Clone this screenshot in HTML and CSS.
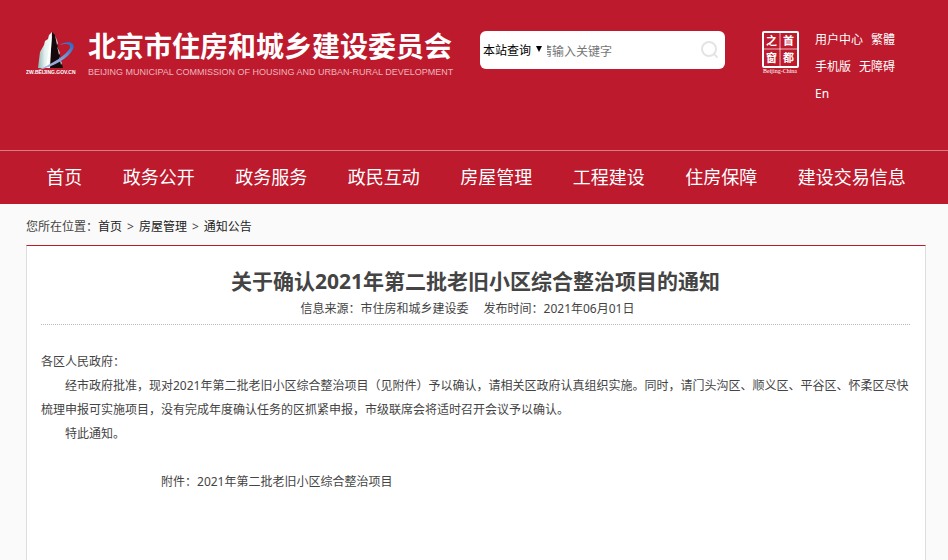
FILE: index.html
```html
<!DOCTYPE html>
<html lang="zh-CN">
<head>
<meta charset="utf-8">
<meta name="viewport" content="width=device-width, initial-scale=1">
<title>关于确认2021年第二批老旧小区综合整治项目的通知</title>
<link rel="stylesheet" href="styles.css">
</head>
<body>
<header class="site-header">
  <div class="masthead container">
    <a class="brand" href="#">
      <svg class="brand-mark" viewBox="0 0 54 48" aria-hidden="true">
        <defs>
          <linearGradient id="face" x1="0" x2="1" y1="0" y2="0">
            <stop offset="0" stop-color="#8fb5b5"/>
            <stop offset="0.5" stop-color="#e4f1ef"/>
            <stop offset="1" stop-color="#f8ffff"/>
          </linearGradient>
          <linearGradient id="orbit" x1="0" x2="1" y1="1" y2="0">
            <stop offset="0" stop-color="#b9b7dd"/>
            <stop offset="0.5" stop-color="#8fa6dc"/>
            <stop offset="1" stop-color="#2166c4"/>
          </linearGradient>
        </defs>
        <path d="M12 40 14 24 18 17 19 13 22 11 23 7 26 4V40Z" fill="url(#face)"/>
        <path d="M26 4 29 7 37 40H24Z" fill="#16090c"/>
        <path d="M26 4 25 20 22 40H20L23 20Z" fill="#fff"/>
        <path d="M29 7 32 15 31 17ZM31 18 34 25 33 27ZM33 28 36 35 35 37Z" fill="#c9c6cc"/>
        <path d="M33 17C42 12 50 14 47 21 43 30 29 38 10 43 28 35 40 27 44 20 45 16 41 15 33 17Z" fill="url(#orbit)"/>
        <text class="brand-domain" x="0" y="46" fill="#fff">ZW.BEIJING.GOV.CN</text>
      </svg>
      <span class="brand-text">
        <span class="brand-name">北京市住房和城乡建设委员会</span>
        <span class="brand-english">BEIJING MUNICIPAL COMMISSION OF HOUSING AND URBAN-RURAL DEVELOPMENT</span>
      </span>
    </a>
    <form class="search">
      <span class="scope">
        <select class="scope-select" aria-label="查询范围">
          <option>本站查询</option>
        </select>
        <svg class="scope-arrow" viewBox="0 0 6 6" aria-hidden="true"><path d="M0 0H6L3 6Z"/></svg>
      </span>
      <input class="search-input" type="text" placeholder="请输入关键字" aria-label="关键字">
      <button class="search-button" type="submit" aria-label="搜索">
        <svg viewBox="0 0 18 18" aria-hidden="true"><circle cx="8" cy="8" r="7"/><path d="M13 13 16 16"/></svg>
      </button>
    </form>
    <a class="seal" href="#" aria-label="首都之窗">
      <svg viewBox="0 0 40 44" aria-hidden="true">
        <rect x="3" y="2" width="35" height="35" rx="1" fill="none" stroke="#fff" stroke-width="2"/>
        <path d="M20 3V36M4 19H37" stroke="#fff" stroke-opacity="0.7"/>
        <text class="seal-char" x="6" y="15">之</text>
        <text class="seal-char" x="23" y="15">首</text>
        <text class="seal-char" x="6" y="32">窗</text>
        <text class="seal-char" x="23" y="32">都</text>
        <text class="seal-caption" x="20" y="43">Beijing-China</text>
      </svg>
    </a>
    <div class="tools">
      <a href="#">用户中心</a>
      <a href="#">繁體</a>
      <a href="#">手机版</a>
      <a href="#">无障碍</a>
      <a href="#">En</a>
    </div>
  </div>
  <nav class="main-nav">
    <div class="nav-list container">
      <a href="#">首页</a>
      <a href="#">政务公开</a>
      <a href="#">政务服务</a>
      <a href="#">政民互动</a>
      <a href="#">房屋管理</a>
      <a href="#">工程建设</a>
      <a href="#">住房保障</a>
      <a href="#">建设交易信息</a>
    </div>
  </nav>
</header>
<main class="container">
  <div class="breadcrumb">
    <span>您所在位置：</span><a href="#">首页</a><span class="sep">&gt;</span><a href="#">房屋管理</a><span class="sep">&gt;</span><a href="#">通知公告</a>
  </div>
  <article class="panel">
    <h1>关于确认2021年第二批老旧小区综合整治项目的通知</h1>
    <div class="meta"><span>信息来源：市住房和城乡建设委</span><span>发布时间：2021年06月01日</span></div>
    <div class="content">
      <p>各区人民政府：</p>
      <p class="indent">经市政府批准，现对2021年第二批老旧小区综合整治项目（见附件）予以确认，请相关区政府认真组织实施。同时，请门头沟区、顺义区、平谷区、怀柔区尽快梳理申报可实施项目，没有完成年度确认任务的区抓紧申报，市级联席会将适时召开会议予以确认。</p>
      <p class="indent">特此通知。</p>
      <p class="attachment">附件：<a href="#">2021年第二批老旧小区综合整治项目</a></p>
    </div>
  </article>
</main>
</body>
</html>
```
FILE: styles.css
```css
* {
  box-sizing: border-box;
}

body {
  margin: 0;
  min-height: 100vh;
  display: flex;
  flex-direction: column;
  background: #fafafa;
  color: #444;
  font: 12px/24px "Noto Sans", "Noto Sans CJK SC", sans-serif;
}

a {
  color: inherit;
  text-decoration: none;
}

.container {
  padding: 0 22px 0 26px;
}

.site-header {
  background: #bd1a2d;
  color: #fff;
}

.masthead {
  display: flex;
  align-items: flex-start;
  height: 150px;
}

.brand {
  display: flex;
  gap: 8px;
  flex: none;
  width: 432px;
  margin: 28px 22px 0 0;
}

.brand-mark {
  flex: none;
  width: 54px;
  height: 48px;
}

.brand-domain {
  font: 700 5px "Liberation Sans", sans-serif;
}

.brand-text {
  display: flex;
  flex-direction: column;
  white-space: nowrap;
}

.brand-name {
  font-size: 28px;
  font-weight: 700;
  line-height: 36px;
}

.brand-english {
  color: #efb5bd;
  font: 9px/16px "Liberation Sans", sans-serif;
}

.search {
  display: flex;
  align-items: center;
  flex: none;
  width: 245px;
  height: 38px;
  margin: 31px 35px 0 0;
  overflow: hidden;
  border-radius: 6px;
  background: #fff;
}

.scope {
  position: relative;
  z-index: 1;
  flex: none;
  width: 67px;
  background: #fff;
}

.scope-select {
  display: block;
  width: 100%;
  height: 26px;
  padding: 2px 0 0 3px;
  border: 0;
  appearance: none;
  background: transparent;
  color: #000;
  font: inherit;
}

.scope-arrow {
  position: absolute;
  top: 9px;
  right: 5px;
  width: 6px;
  height: 6px;
  pointer-events: none;
}

.search-input {
  flex: 1;
  min-width: 0;
  height: 26px;
  margin-left: -7px;
  padding: 2px 0 0;
  border: 0;
  background: transparent;
  font: inherit;
}

.search-input::placeholder {
  color: #757575;
}

.search-button {
  width: 30px;
  height: 38px;
  padding: 0 6px;
  border: 0;
  background: transparent;
}

.search-button svg {
  display: block;
  width: 18px;
  height: 18px;
  fill: none;
  stroke: #e4e4e4;
  stroke-width: 2;
  stroke-linecap: round;
}

.seal {
  flex: none;
  width: 40px;
  margin: 30px 15px 0 0;
}

.seal svg {
  display: block;
  width: 100%;
}

.seal-char {
  fill: #fff;
  font: 700 11px "Noto Sans CJK SC", sans-serif;
}

.seal-caption {
  fill: #fff;
  font: 6px "Liberation Serif", serif;
  text-anchor: middle;
}

.tools {
  display: flex;
  flex-wrap: wrap;
  column-gap: 8px;
  max-width: 92px;
  margin-top: 26px;
  line-height: 27px;
}

.main-nav {
  border-top: 1px solid #d77b82;
}

.nav-list {
  display: flex;
  justify-content: space-around;
  font-size: 18px;
  line-height: 53px;
  white-space: nowrap;
}

main {
  display: flex;
  flex-direction: column;
  flex: 1;
}

.breadcrumb {
  padding: 11px 0 6px;
}

.breadcrumb a {
  color: #222;
}

.sep {
  margin: 0 5px;
}

.panel {
  flex: 1;
  padding: 20px 15px 0 14px;
  border: 1px solid #ddd;
  border-top-color: #bd1a2d;
  border-bottom: 0;
  background: #fff;
}

h1 {
  margin: 0;
  font-size: 21px;
  line-height: 31px;
  text-align: center;
}

.meta {
  display: flex;
  justify-content: center;
  gap: 15px;
  padding: 0 16px 3px 0;
  border-bottom: 1px dotted #bbb;
}

.content {
  padding-top: 25px;
}

.content p {
  margin: 0;
}

.content .indent {
  text-indent: 2em;
}

.content .attachment {
  margin-top: 24px;
  text-indent: 10em;
}
```
